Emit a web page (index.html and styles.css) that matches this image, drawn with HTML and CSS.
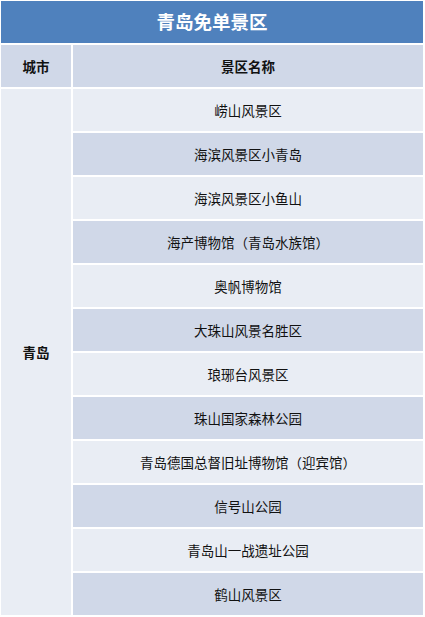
FILE: index.html
```html
<!DOCTYPE html>
<html lang="zh-CN">
<head>
<meta charset="utf-8">
<link rel="stylesheet" href="styles.css">
</head>
<body>
<div class="table">
  <div class="title">青岛免单景区</div>
  <div class="head">城市</div>
  <div class="head">景区名称</div>
  <div class="city">青岛</div>
  <div class="cell light">崂山风景区</div>
  <div class="cell dark">海滨风景区小青岛</div>
  <div class="cell light">海滨风景区小鱼山</div>
  <div class="cell dark">海产博物馆（青岛水族馆）</div>
  <div class="cell light">奥帆博物馆</div>
  <div class="cell dark">大珠山风景名胜区</div>
  <div class="cell light">琅琊台风景区</div>
  <div class="cell dark">珠山国家森林公园</div>
  <div class="cell light">青岛德国总督旧址博物馆（迎宾馆）</div>
  <div class="cell dark">信号山公园</div>
  <div class="cell light">青岛山一战遗址公园</div>
  <div class="cell dark">鹤山风景区</div>
</div>
</body>
</html>
```

FILE: styles.css
```css
html, body {
  margin: 0;
  padding: 0;
  background: #ffffff;
}
body {
  font-family: "Noto Sans CJK SC", "Noto Sans", sans-serif;
  color: #111;
}
.table {
  display: grid;
  grid-template-columns: 70px 350px;
  grid-auto-rows: 42px;
  gap: 2px;
  padding: 1px 0 0 1px;
  width: 422px;
}
.title {
  grid-column: 1 / 3;
  background: #4f81bd;
  color: #fff;
  font-weight: 700;
  font-size: 18.5px;
  display: flex;
  align-items: center;
  justify-content: center;
  padding-bottom: 2px;
  box-sizing: border-box;
}
.head {
  background: #d0d8e8;
  font-weight: 700;
  font-size: 13.5px;
  display: flex;
  align-items: center;
  justify-content: center;
  padding-bottom: 1px;
  box-sizing: border-box;
}
.city {
  grid-row: span 12;
  background: #e9edf4;
  font-weight: 700;
  font-size: 13.5px;
  display: flex;
  align-items: center;
  justify-content: center;
  padding-bottom: 1px;
  box-sizing: border-box;
}
.cell {
  font-size: 13.5px;
  display: flex;
  align-items: center;
  justify-content: center;
  padding-bottom: 1px;
  box-sizing: border-box;
}
.light { background: #e9edf4; }
.dark { background: #d0d8e8; }
```
